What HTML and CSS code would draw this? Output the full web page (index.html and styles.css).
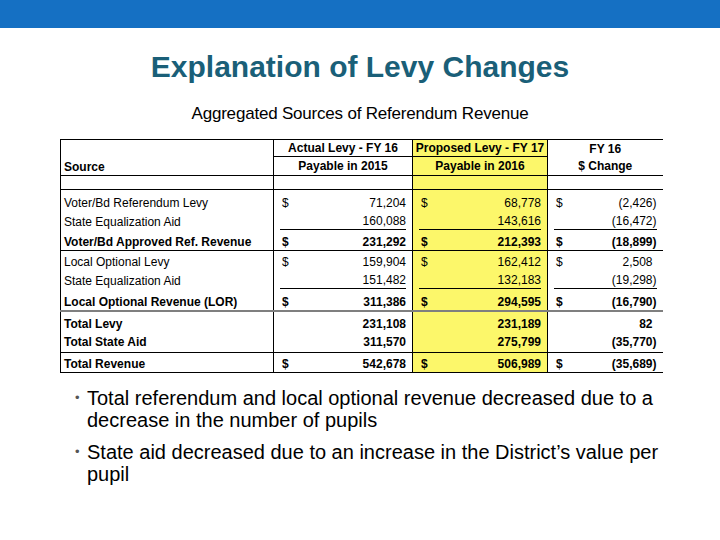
FILE: index.html
```html
<!DOCTYPE html>
<html lang="en">
<head>
    <meta charset="UTF-8">
    <title>Explanation of Levy Changes</title>
    <link rel="stylesheet" href="styles.css">
</head>
<body>
    <header class="topbar"></header>
    <main class="slide">
        <h1 class="title">Explanation of Levy Changes</h1>
        <h2 class="subtitle">Aggregated Sources of Referendum Revenue</h2>
        <table class="levy">
            <colgroup>
                <col class="c-src">
                <col class="c-act">
                <col class="c-prop">
                <col class="c-chg">
            </colgroup>
            <thead>
                <tr class="hrow1">
                    <th class="src" rowspan="2">Source</th>
                    <th class="ul">Actual Levy - FY 16</th>
                    <th class="yel ul">Proposed Levy - FY 17</th>
                    <th>FY 16</th>
                </tr>
                <tr class="hrow2">
                    <th>Payable in 2015</th>
                    <th class="yel">Payable in 2016</th>
                    <th>$ Change</th>
                </tr>
                <tr class="spacer">
                    <td></td><td></td><td class="yel"></td><td></td>
                </tr>
            </thead>
            <tbody>
                <!-- referendum -->
                <tr class="r1">
                    <td class="src">Voter/Bd Referendum Levy</td>
                    <td><div class="amt"><span>$</span><span>71,204</span></div></td>
                    <td class="yel"><div class="amt"><span>$</span><span>68,778</span></div></td>
                    <td><div class="amt"><span>$</span><span>(2,426)</span></div></td>
                </tr>
                <tr class="r2">
                    <td class="src">State Equalization Aid</td>
                    <td><div class="amt ul"><span></span><span>160,088</span></div></td>
                    <td class="yel"><div class="amt ul"><span></span><span>143,616</span></div></td>
                    <td><div class="amt ul"><span></span><span>(16,472)</span></div></td>
                </tr>
                <tr class="r3 bold">
                    <td class="src">Voter/Bd Approved Ref. Revenue</td>
                    <td><div class="amt"><span>$</span><span>231,292</span></div></td>
                    <td class="yel"><div class="amt"><span>$</span><span>212,393</span></div></td>
                    <td><div class="amt"><span>$</span><span>(18,899)</span></div></td>
                </tr>
                <!-- local optional -->
                <tr class="r4 line-top">
                    <td class="src">Local Optional Levy</td>
                    <td><div class="amt"><span>$</span><span>159,904</span></div></td>
                    <td class="yel"><div class="amt"><span>$</span><span>162,412</span></div></td>
                    <td><div class="amt"><span>$</span><span class="np">2,508</span></div></td>
                </tr>
                <tr class="r5">
                    <td class="src">State Equalization Aid</td>
                    <td><div class="amt ul"><span></span><span>151,482</span></div></td>
                    <td class="yel"><div class="amt ul"><span></span><span>132,183</span></div></td>
                    <td><div class="amt ul"><span></span><span>(19,298)</span></div></td>
                </tr>
                <tr class="r6 bold">
                    <td class="src">Local Optional Revenue (LOR)</td>
                    <td><div class="amt"><span>$</span><span>311,386</span></div></td>
                    <td class="yel"><div class="amt"><span>$</span><span>294,595</span></div></td>
                    <td><div class="amt"><span>$</span><span>(16,790)</span></div></td>
                </tr>
                <!-- totals -->
                <tr class="r7 bold line-grey">
                    <td class="src">Total Levy</td>
                    <td><div class="amt"><span></span><span>231,108</span></div></td>
                    <td class="yel"><div class="amt"><span></span><span>231,189</span></div></td>
                    <td><div class="amt"><span></span><span class="np">82</span></div></td>
                </tr>
                <tr class="r8 bold">
                    <td class="src">Total State Aid</td>
                    <td><div class="amt"><span></span><span>311,570</span></div></td>
                    <td class="yel"><div class="amt"><span></span><span>275,799</span></div></td>
                    <td><div class="amt"><span></span><span>(35,770)</span></div></td>
                </tr>
                <tr class="r9 bold line-top">
                    <td class="src">Total Revenue</td>
                    <td><div class="amt"><span>$</span><span>542,678</span></div></td>
                    <td class="yel"><div class="amt"><span>$</span><span>506,989</span></div></td>
                    <td><div class="amt"><span>$</span><span>(35,689)</span></div></td>
                </tr>
            </tbody>
        </table>
        <ul class="notes">
            <li>Total referendum and local optional revenue decreased due to a decrease in the number of pupils</li>
            <li>State aid decreased due to an increase in the District’s value per pupil</li>
        </ul>
    </main>
</body>
</html>
```

FILE: styles.css
```css
body {
    margin: 0;
    padding: 0;
    background: white;
    font-family: "Liberation Sans", Arial, sans-serif;
    color: #000;
}
.topbar {
    height: 28px;
    background-color: #1570c3;
}
.slide {
    padding: 0 0 0 60px;
}
.title {
    margin: 20px 0 0 -60px;
    font-size: 30px;
    font-weight: bold;
    line-height: 38px;
    text-align: center;
    color: #1a5f78;
}
.subtitle {
    margin: 18px 0 0 -60px;
    font-size: 17px;
    font-weight: normal;
    line-height: 20px;
    text-align: center;
    letter-spacing: -0.2px;
}

/* table */
.levy {
    margin-top: 15px;
    width: 602px;
    border-collapse: collapse;
    table-layout: fixed;
    font-size: 12px;
    border-top: 1px solid #000;
    border-left: 1px solid #000;
    border-bottom: 1px solid #000;
}
.c-src { width: 213px; }
.c-act { width: 139px; }
.c-prop { width: 135px; }
.c-chg { width: 115px; }
.levy th,
.levy td {
    padding: 0;
    border-left: 1px solid #000;
    line-height: 16px;
    vertical-align: bottom;
}
.levy th {
    font-weight: bold;
    text-align: center;
}
.levy .src {
    text-align: left;
    padding-left: 3px;
}
.levy th.src {
    padding-bottom: 0;
}
.levy .yel {
    background-color: #fcf76a;
}
.levy th.ul {
    border-bottom: 1px solid #000;
}
.hrow1 th { height: 15px; }
.hrow2 th { height: 17px; padding-bottom: 1px; }
.spacer td {
    height: 13px;
    border-top: 1px solid #000;
    border-bottom: 1px solid #000;
}
.levy tbody td {
    padding-bottom: 2px;
}
.levy tbody tr.bold td {
    font-weight: bold;
    padding-bottom: 0;
}
.r1 td { height: 21px; }
.r2 td { height: 17px; }
.r3 td { height: 18px; }
.r4 td { height: 19px; }
.r5 td { height: 16px; }
.r6 td { height: 19px; }
.r7 td { height: 20px; }
.r8 td { height: 18px; padding-bottom: 2px !important; }
.r9 td { height: 19px; }
.line-top td {
    border-top: 1px solid #000;
}
.line-grey td {
    border-top: 2px solid #7f7f7f;
}
.amt {
    display: flex;
    justify-content: space-between;
    margin: 0 6px 0 6px;
    padding-left: 2px;
}
.amt.ul {
    border-bottom: 1px solid #000;
}
.amt .np {
    padding-right: 4px;
}

/* notes */
.notes {
    list-style: none;
    margin: 14px 0 0 0;
    padding: 0 0 0 15px;
    width: 606px;
    font-size: 20px;
    line-height: 22px;
}
.notes li {
    position: relative;
    padding-left: 12px;
    margin-bottom: 10px;
}
.notes li::before {
    content: "•";
    position: absolute;
    left: 0;
    top: 0;
    font-size: 13px;
    color: #555;
}
```
